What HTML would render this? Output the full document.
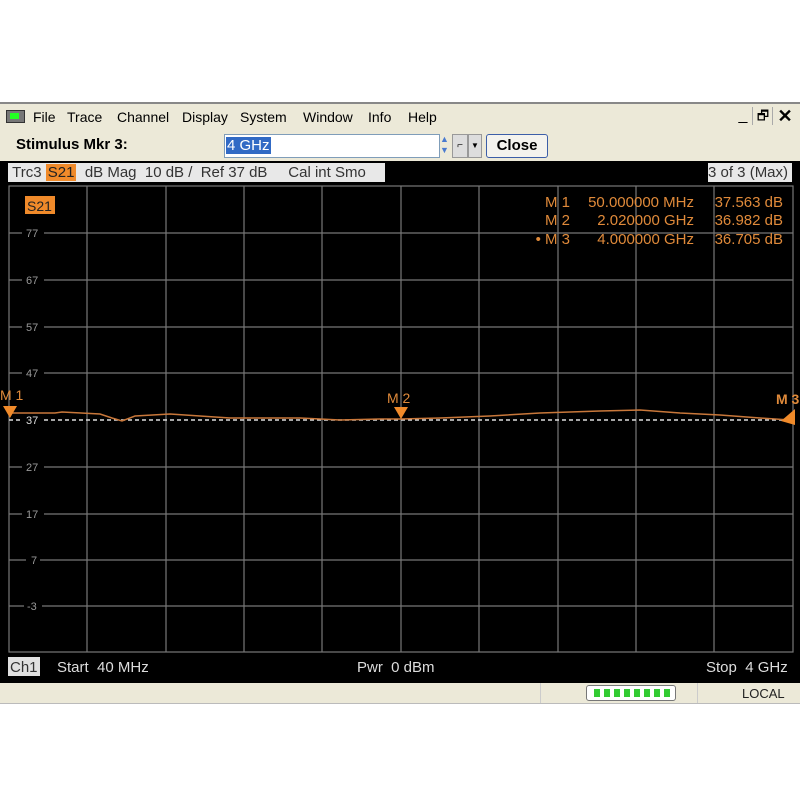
<!DOCTYPE html>
<html><head><style>
body{margin:0;width:800px;height:800px;background:#fff;position:relative;overflow:hidden;font-family:"Liberation Sans",sans-serif}
.a{position:absolute}
.menu{left:0;top:102px;width:800px;height:26px;background:#ece9d8;border-top:2px solid #888}
.menu span{position:absolute;top:5px;font-size:14px;color:#000}
.bar2{left:0;top:130px;width:800px;height:32px;background:#ece9d8}
.blk{left:0;top:161px;width:800px;height:522px;background:#000}
.stat{left:0;top:683px;width:800px;height:20px;background:#ece9d8;border-bottom:1px solid #bbb}
.hd{top:163px;height:19px;font-size:15px;line-height:19px}
</style></head><body>
<div class="a menu">
<div class="a" style="left:6px;top:6px;width:17px;height:11px;border:1px solid #333;background:#777"><div class="a" style="left:3px;top:2px;width:9px;height:6px;background:#2f2"></div></div>
<span style="left:33px">File</span><span style="left:67px">Trace</span><span style="left:117px">Channel</span><span style="left:182px">Display</span><span style="left:240px">System</span><span style="left:303px">Window</span><span style="left:368px">Info</span><span style="left:408px">Help</span>
<div class="a" style="left:734px;top:3px;width:18px;height:18px;border-right:1px solid #aaa;font-size:16px;text-align:center">_</div>
<div class="a" style="left:754px;top:3px;width:18px;height:18px;border-right:1px solid #aaa;font-size:13px;text-align:center;line-height:18px">🗗</div>
<div class="a" style="left:776px;top:2px;width:18px;height:18px;font-size:18px;font-weight:bold;text-align:center">✕</div>
</div>
<div class="a bar2">
<div class="a" style="left:16px;top:6px;font-size:15px;font-weight:bold">Stimulus Mkr 3:</div>
<div class="a" style="left:224px;top:4px;width:214px;height:22px;background:#fff;border:1px solid #7f9db9"><span class="a" style="left:1px;top:2px;background:#316ac5;color:#fff;font-size:15px;padding:0 1px">4 GHz</span></div>
<div class="a" style="left:440px;top:4px;width:10px;height:22px;color:#4a7bd0;font-size:9px;line-height:11px">▲<br>▼</div>
<div class="a" style="left:452px;top:4px;width:14px;height:22px;background:#ddd;border:1px solid #999;font-size:10px;text-align:center;line-height:22px">⌐</div>
<div class="a" style="left:468px;top:4px;width:12px;height:22px;background:#ddd;border:1px solid #999;font-size:8px;text-align:center;line-height:22px">▼</div>
<div class="a" style="left:486px;top:4px;width:60px;height:22px;background:#f4f3ee;border:1px solid #3c5ea8;border-radius:3px;font-size:15px;font-weight:bold;text-align:center;line-height:22px">Close</div>
</div>
<div class="a blk"></div>
<div class="a hd" style="left:8px;width:377px;background:#e8e8e8;color:#333">&nbsp;Trc3 <span style="background:#f08a2a;color:#222;padding:0 2px">S21</span>&nbsp; dB Mag &nbsp;10 dB / &nbsp;Ref 37 dB &nbsp;&nbsp;&nbsp; Cal int Smo</div>
<div class="a hd" style="left:708px;width:84px;background:#e8e8e8;color:#333">3 of 3 (Max)</div>
<svg class="a" style="left:0;top:0" width="800" height="800">
<g stroke="#777" stroke-width="1.2">
<rect x="9" y="186" width="784" height="466" fill="none"/>
<line x1="87" y1="186" x2="87" y2="652"/><line x1="166" y1="186" x2="166" y2="652"/><line x1="244" y1="186" x2="244" y2="652"/><line x1="322" y1="186" x2="322" y2="652"/><line x1="401" y1="186" x2="401" y2="652"/><line x1="479" y1="186" x2="479" y2="652"/><line x1="558" y1="186" x2="558" y2="652"/><line x1="636" y1="186" x2="636" y2="652"/><line x1="714" y1="186" x2="714" y2="652"/>
<line x1="9" y1="233" x2="793" y2="233"/><line x1="9" y1="280" x2="793" y2="280"/><line x1="9" y1="327" x2="793" y2="327"/><line x1="9" y1="373" x2="793" y2="373"/><line x1="9" y1="467" x2="793" y2="467"/><line x1="9" y1="514" x2="793" y2="514"/><line x1="9" y1="560" x2="793" y2="560"/><line x1="9" y1="606" x2="793" y2="606"/>
</g>
<line x1="9" y1="420" x2="793" y2="420" stroke="#ddd" stroke-width="1.5" stroke-dasharray="4,3"/>
<g font-size="11" fill="#999" font-family="Liberation Sans">
<rect x="22" y="227" width="22" height="12" fill="#000"/><text x="26" y="237">77</text>
<rect x="22" y="274" width="22" height="12" fill="#000"/><text x="26" y="284">67</text>
<rect x="22" y="321" width="22" height="12" fill="#000"/><text x="26" y="331">57</text>
<rect x="22" y="367" width="22" height="12" fill="#000"/><text x="26" y="377">47</text>
<rect x="22" y="414" width="22" height="12" fill="#000"/><text x="26" y="424" fill="#ddd">37</text>
<rect x="22" y="461" width="22" height="12" fill="#000"/><text x="26" y="471">27</text>
<rect x="22" y="508" width="22" height="12" fill="#000"/><text x="26" y="518">17</text>
<rect x="26" y="554" width="14" height="12" fill="#000"/><text x="31" y="564">7</text>
<rect x="24" y="600" width="18" height="12" fill="#000"/><text x="27" y="610">-3</text>
</g>
<polyline fill="none" stroke="#c8773a" stroke-width="1.5" points="9,413 55,413 62,412 100,414 112,418 122,421 135,416 170,414 230,418 300,418 340,420 380,419 401,419 440,418 490,416 540,413 600,411 640,410 680,413 720,415 760,418 790,420"/>
<polygon points="3,406 17,406 10,418" fill="#f08a2a"/>
<polygon points="394,407 408,407 401,419" fill="#f08a2a"/>
<polygon points="795,409 795,425 781,421" fill="#f08a2a"/>
<g fill="#e08a3a" font-size="14" font-family="Liberation Sans">
<text x="0" y="400">M 1</text><text x="387" y="403">M 2</text><text x="776" y="404" font-weight="bold">M 3</text>
</g>
<g fill="#e08a3a" font-size="15" font-family="Liberation Sans" text-anchor="end">
<text x="570" y="207">M 1</text><text x="694" y="207">50.000000 MHz</text><text x="783" y="207">37.563 dB</text>
<text x="570" y="225">M 2</text><text x="694" y="225">2.020000 GHz</text><text x="783" y="225">36.982 dB</text>
<text x="570" y="244">• M 3</text><text x="694" y="244">4.000000 GHz</text><text x="783" y="244">36.705 dB</text>
</g>
<rect x="25" y="196" width="30" height="18" fill="#f08a2a"/><text x="27" y="211" font-size="14" fill="#222" font-family="Liberation Sans">S21</text>
<rect x="8" y="657" width="32" height="19" fill="#e0e0e0"/>
<g font-size="15" font-family="Liberation Sans" fill="#ddd">
<text x="10" y="672" fill="#333">Ch1</text><text x="57" y="672">Start&#160;&#160;40 MHz</text><text x="357" y="672">Pwr&#160;&#160;0 dBm</text><text x="706" y="672">Stop&#160;&#160;4 GHz</text>
</g>
</svg>
<div class="a stat">
<div class="a" style="left:540px;top:0;width:1px;height:20px;background:#ccc"></div>
<div class="a" style="left:586px;top:2px;width:88px;height:14px;border:1px solid #777;border-radius:3px;background:#fff"></div>
<div class="a" style="left:594px;top:6px;width:76px;height:8px;background:repeating-linear-gradient(90deg,#3c3 0 6px,transparent 6px 10px)"></div>
<div class="a" style="left:697px;top:0;width:1px;height:20px;background:#ccc"></div>
<div class="a" style="left:742px;top:3px;font-size:13px;color:#222">LOCAL</div>
</div>
</body></html>
